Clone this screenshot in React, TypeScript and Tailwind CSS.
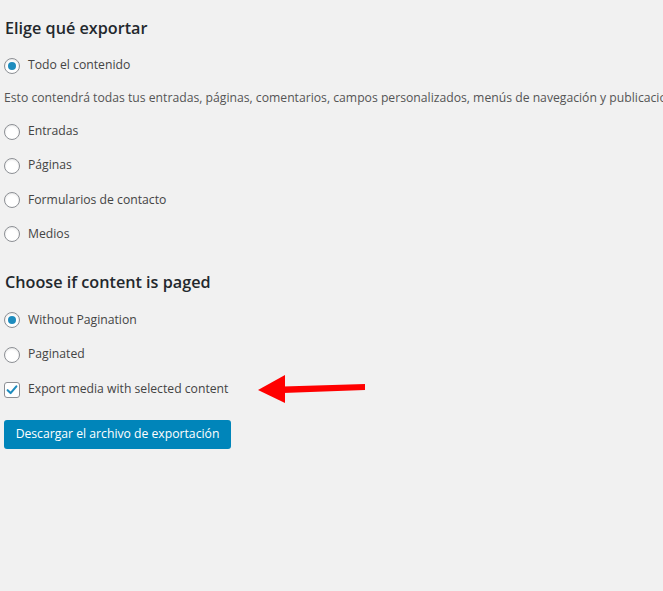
const font = { fontFamily: '"Open Sans", "Liberation Sans", sans-serif' };

function Radio({ checked }: { checked?: boolean }) {
  return (
    <span className="flex h-4 w-4 shrink-0 items-center justify-center rounded-full border border-[#8c8f94] bg-white shadow-[inset_0_1px_2px_rgba(0,0,0,0.1)]">
      {checked && <span className="h-2 w-2 rounded-full bg-[#1e8cbe]" />}
    </span>
  );
}

function Checkbox() {
  return (
    <span className="flex h-4 w-4 shrink-0 items-center justify-center rounded-[3px] border border-[#8c8f94] bg-white">
      <svg viewBox="0 0 16 16" className="h-[14px] w-[14px]">
        <path d="M3 8.2 L6.4 11.5 L13 3.8" fill="none" stroke="#1e8cbe" strokeWidth="2.4" strokeLinecap="round" strokeLinejoin="round" />
      </svg>
    </span>
  );
}

function Row({ h, children }: { h: string; children: React.ReactNode }) {
  return <div className={`flex items-center gap-2 ${h}`}>{children}</div>;
}

export default function App() {
  return (
    <div className="relative min-h-[591px] w-[663px] overflow-hidden bg-[#f1f1f1] pl-1 text-[12.2px] text-[#444]" style={font}>
      <h2 className="mt-[16px] flex h-6 items-center pl-px text-[16.2px] font-semibold text-[#23282d]">Elige qué exportar</h2>
      <div className="mt-[9px]">
        <Row h="h-[33px]">
          <Radio checked />
          <span>Todo el contenido</span>
        </Row>
        <div className="flex h-[33px] items-center whitespace-nowrap text-[#555]">
          Esto contendrá todas tus entradas, páginas, comentarios, campos personalizados, menús de navegación y publicaciones personalizadas.
        </div>
        <Row h="h-[33px]">
          <Radio />
          <span>Entradas</span>
        </Row>
        <Row h="h-[35px]">
          <Radio />
          <span>Páginas</span>
        </Row>
        <Row h="h-[34px]">
          <Radio />
          <span>Formularios de contacto</span>
        </Row>
        <Row h="h-[34px]">
          <Radio />
          <span>Medios</span>
        </Row>
      </div>
      <h2 className="mt-[19px] flex h-6 items-center pl-px text-[16.2px] font-semibold text-[#23282d]">Choose if content is paged</h2>
      <div className="mt-[9px]">
        <Row h="h-[34px]">
          <Radio checked />
          <span>Without Pagination</span>
        </Row>
        <Row h="h-[35px]">
          <Radio />
          <span>Paginated</span>
        </Row>
        <Row h="h-[35px]">
          <Checkbox />
          <span>Export media with selected content</span>
        </Row>
      </div>
      <button className="mt-[13px] flex h-[29px] w-[227px] items-center justify-center rounded-[3px] bg-[#0085ba] text-[12.2px] text-white">
        Descargar el archivo de exportación
      </button>
      <svg className="absolute left-[256px] top-[374px]" width="112" height="32" viewBox="0 0 112 32">
        <polygon points="2,16 29,1 29,29" fill="#ff0000" />
        <polygon points="27,12.5 109,10 109,16 27,19" fill="#ff0000" />
      </svg>
    </div>
  );
}
